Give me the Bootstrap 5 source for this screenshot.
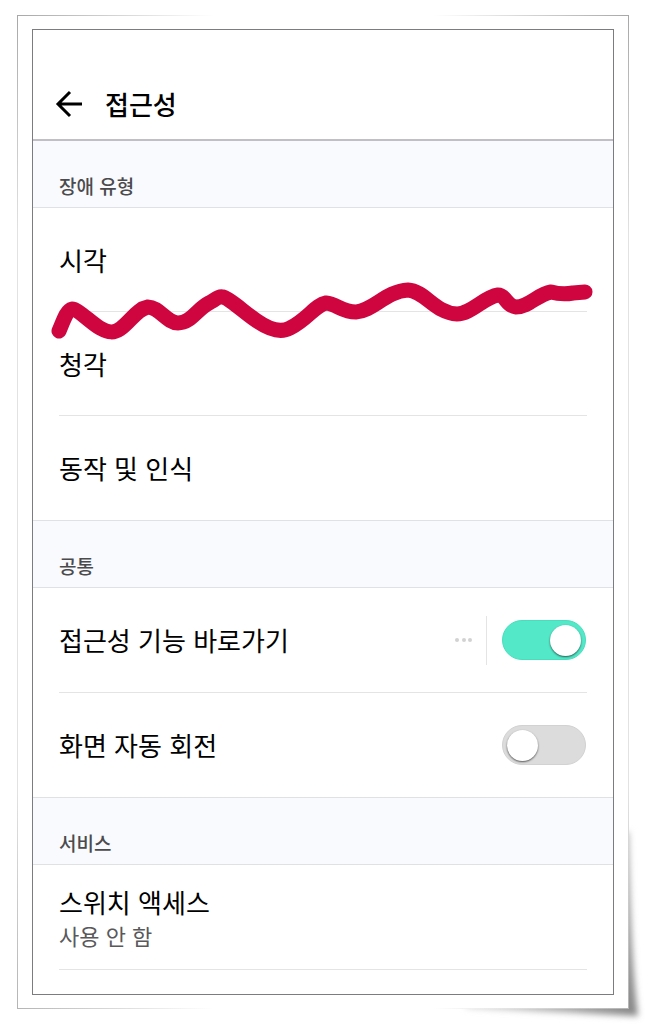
<!DOCTYPE html>
<html lang="ko">
<head>
<meta charset="utf-8">
<meta name="viewport" content="width=device-width, initial-scale=1">
<title>접근성</title>
<link rel="stylesheet" href="https://cdn.jsdelivr.net/npm/bootstrap@5.3.0/dist/css/bootstrap.min.css">
<style>
  body { font-family: "Noto Sans CJK KR", sans-serif; color: #000; background: #fff; padding: 15px 17px; }
  .paper {
    padding: 14px 15px;
    background:
      linear-gradient(90deg, #a8a8a8, #fff 32%, #fff 68%, #a8a8a8) top / 100% 1px no-repeat,
      linear-gradient(90deg, #b4b4b4, #fff 32%, #fff 68%, #b4b4b4) bottom / 100% 1px no-repeat,
      linear-gradient(#a8a8a8, #e2e2e2 22%, #e2e2e2 78%, #b4b4b4) left / 1px 100% no-repeat,
      linear-gradient(#a8a8a8, #e2e2e2 22%, #e2e2e2 78%, #b4b4b4) right / 1px 100% no-repeat,
      #fff;
  }
  .paper-shadow { right: -17px; bottom: -15px; width: 200px; height: 200px; z-index: -1; }
  .phone-screen { border: 1px solid #7c7c80; padding-bottom: 24px; }
  .app-bar { padding: 46px 20px 8px; height: 109px; }
  .app-bar-edge { height: 2px; background: #c1bfc5; }
  .app-bar h1 { font-size: 26px; line-height: 38px; font-weight: 500; }
  .section-title { font-size: 19px; line-height: 30px; font-weight: 500; color: #4b4b4d; background: #f9fafe; padding: 30px 26px 6px; border-bottom: 1px solid #e0e1e5; }
  .section-title.divided { border-top: 1px solid #e0e1e5; }
  .settings { padding: 0 26px; }
  .settings li { min-height: 104px; font-size: 26px; line-height: 36px; border-bottom: 1px solid #e4e4e4; }
  .settings li.tall { min-height: 105px; }
  .settings li:last-child:not(:first-child) { border-bottom: 0; }
  .settings a { color: inherit; }
  .status-text { font-size: 22px; line-height: 30px; color: #59595b; }
  .more-btn { width: 47px; height: 49px; border-right: 1px solid #e4e4e4; }
  .toggle { appearance: none; width: 84px; height: 40px; border-radius: 20px; background: #dcdcdc; border: 1px solid #d2d2d2; padding: 4px; margin: 0 1px 0 15px; display: flex; }
  .toggle::before { content: ""; width: 31px; height: 31px; border-radius: 50%; background: #fff; box-shadow: 0 1px 2px rgba(0,0,0,.6); }
  .toggle:checked { background: #53e8c8; border-color: #46dfbe; justify-content: flex-end; }
</style>
</head>
<body>
<main class="paper position-relative">
  <svg class="paper-shadow position-absolute" viewBox="446 824 200 200" aria-hidden="true">
    <defs>
      <linearGradient id="side" x1="0" y1="830" x2="0" y2="1016" gradientUnits="userSpaceOnUse"><stop offset="0" stop-color="#bbb"/><stop offset="1" stop-color="#888"/></linearGradient>
      <linearGradient id="foot" x1="460" y1="0" x2="636" y2="0" gradientUnits="userSpaceOnUse"><stop offset="0" stop-color="#ddd"/><stop offset="1" stop-color="#888"/></linearGradient>
      <filter id="soft" x="-20%" y="-20%" width="140%" height="140%"><feGaussianBlur stdDeviation="3"/></filter>
    </defs>
    <g filter="url(#soft)">
      <path d="M620 832 L629 832 Q631 960 638 1016 L620 1010Z" fill="url(#side)"/>
      <path d="M466 1000 L622 1000 L638 1016 Q560 1012 466 1008Z" fill="url(#foot)"/>
    </g>
  </svg>
  <div class="phone-screen bg-white">
    <header class="app-bar d-flex align-items-center">
      <button type="button" class="btn border-0 p-0 d-flex" aria-label="뒤로">
        <svg width="32" height="32" viewBox="0 0 32 32" fill="none" stroke="#000" stroke-width="3"><path d="M29 16H5M17 4L5 16l12 12"/></svg>
      </button>
      <h1 class="mb-0 ms-3 ps-1">접근성</h1>
    </header>
    <div class="app-bar-edge"></div>

    <h2 class="section-title mb-0">장애 유형</h2>
    <div class="position-relative">
      <ul class="settings list-unstyled mb-0">
        <li class="d-flex align-items-center"><a href="#" class="text-decoration-none">시각</a></li>
        <li class="d-flex align-items-center"><a href="#" class="text-decoration-none">청각</a></li>
        <li class="d-flex align-items-center"><a href="#" class="text-decoration-none">동작 및 인식</a></li>
      </ul>
      <svg class="position-absolute top-0 start-0 w-100 pe-none" viewBox="33 208 580 312" fill="none" stroke="#cf0540" stroke-width="15" stroke-linecap="round" stroke-linejoin="round" aria-hidden="true">
        <path d="M59 331C64 319 67 310 72 309C78 309 91 323 100 328C109 333 114 333 120 329C131 321 137 309 148 307C159 307 167 323 178 323C191 323 197 309 209 303C216 299 219 296 223 297C229 298 245 313 257 321C270 330 281 333 290 328C308 319 315 305 326 303C337 304 342 312 356 312C373 311 386 291 408 290C425 291 435 313 457 314C471 314 484 297 498 295C506 295 506 306 516 307C529 307 538 294 551 292Q562 295 573 293L585 292"/>
      </svg>
    </div>

    <h2 class="section-title divided mb-0">공통</h2>
    <ul class="settings list-unstyled mb-0">
      <li class="tall d-flex align-items-center">
        <label for="shortcut" class="me-auto">접근성 기능 바로가기</label>
        <button type="button" class="more-btn btn rounded-0 border-top-0 border-bottom-0 border-start-0 p-0 d-flex align-items-center justify-content-center" aria-label="더보기">
          <svg width="18" height="4" viewBox="0 0 18 4" fill="#d2d2d4"><circle cx="3" cy="2" r="2"/><circle cx="10" cy="2" r="2"/><circle cx="16" cy="2" r="2"/></svg>
        </button>
        <input type="checkbox" role="switch" id="shortcut" class="toggle" checked>
      </li>
      <li class="d-flex align-items-center">
        <label for="rotate" class="me-auto">화면 자동 회전</label>
        <input type="checkbox" role="switch" id="rotate" class="toggle">
      </li>
    </ul>

    <h2 class="section-title divided mb-0">서비스</h2>
    <ul class="settings list-unstyled mb-0">
      <li class="tall d-flex flex-column justify-content-center">
        <a href="#" class="text-decoration-none">스위치 액세스</a>
        <span class="status-text">사용 안 함</span>
      </li>
    </ul>
  </div>
</main>
<script src="https://cdn.jsdelivr.net/npm/bootstrap@5.3.0/dist/js/bootstrap.bundle.min.js"></script>
</body>
</html>
